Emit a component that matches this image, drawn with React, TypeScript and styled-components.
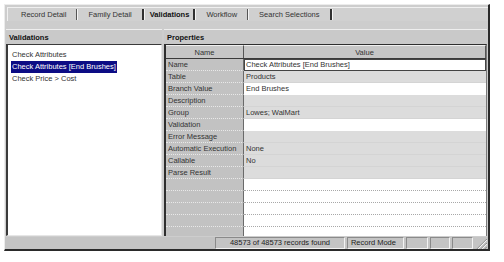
import React from "react";
import styled, { createGlobalStyle, css } from "styled-components";

const Global = createGlobalStyle`
  html, body { margin: 0; padding: 0; background: #ffffff; }
  body { font-family: "Liberation Sans", Arial, sans-serif; font-size: 7.5px; color: #1a1a1a; }
  * { box-sizing: border-box; }
`;

const Window = styled.div`
  margin: 4px 0 0 4px;
  width: 486px;
  height: 247px;
  background: #cdcdcd;
  border-top: 1px solid #ececec;
  border-left: 1px solid #ececec;
  border-right: 2px solid #2a2a2a;
  border-bottom: 2px solid #2a2a2a;
  display: flex;
  flex-direction: column;
`;

const TabBar = styled.div`
  margin: 2px 0 0 2px;
  height: 15px;
  display: flex;
  align-items: center;
  border-top: 1px solid #f0f0f0;
  border-left: 1px solid #f0f0f0;
  background: #d0d0d0;
  padding-left: 3px;
`;

const Tab = styled.div<{ $active?: boolean }>`
  font-size: 7.5px;
  color: #333;
  padding: 0 10px;
  white-space: nowrap;
  ${(p) =>
    p.$active &&
    css`
      font-weight: bold;
      color: #111;
      padding: 0 4px 0 5px;
    `}
`;

const Sep = styled.div<{ $strong?: boolean }>`
  width: ${(p) => (p.$strong ? "2px" : "1px")};
  height: 11px;
  background: ${(p) => (p.$strong ? "#303030" : "#555")};
  border-right: 1px solid #f4f4f4;
  box-sizing: content-box;
`;

const Panels = styled.div`
  margin: 8px 0 0 1px;
  height: 207px;
  display: flex;
  gap: 2px;
`;

const Panel = styled.div<{ $w: number }>`
  width: ${(p) => p.$w}px;
  display: flex;
  flex-direction: column;
`;

const PanelHeader = styled.div`
  height: 15px;
  display: flex;
  align-items: center;
  padding-left: 3px;
  font-weight: bold;
  font-size: 7.5px;
  color: #111;
  border-top: 1px solid #eeeeee;
  background: #c9c9c9;
`;

const List = styled.div`
  flex: 1;
  background: #ffffff;
  border-left: 2px solid #3a3a3a;
  border-top: 1px solid #3a3a3a;
  border-right: 1px solid #e6e6e6;
  border-bottom: 1px solid #e6e6e6;
  padding: 4px 0 0 3px;
  display: flex;
  flex-direction: column;
  align-items: flex-start;
`;

const Item = styled.div<{ $sel?: boolean }>`
  height: 12px;
  line-height: 12px;
  padding: 0 1px;
  color: #333;
  white-space: nowrap;
  ${(p) =>
    p.$sel &&
    css`
      background: #0c0c84;
      color: #ffffff;
    `}
`;

const Grid = styled.div`
  flex: 1;
  border-left: 2px solid #2e2e2e;
  border-top: 1px solid #2e2e2e;
  border-right: 1px solid #7a7a7a;
  display: flex;
  flex-direction: column;
  overflow: hidden;
  background: #ffffff;
`;

const HeadRow = styled.div`
  height: 14px;
  display: flex;
  border-bottom: 1px solid #3a3a3a;
  flex: none;
`;

const HeadCell = styled.div<{ $name?: boolean }>`
  ${(p) => (p.$name ? "width: 78px;" : "flex: 1;")}
  background: #c6c6c6;
  border-top: 1px solid #efefef;
  border-right: 1px solid #555;
  display: flex;
  align-items: center;
  justify-content: center;
  color: #333;
`;

const Row = styled.div`
  height: 12px;
  display: flex;
  flex: none;
`;

const NameCell = styled.div`
  width: 78px;
  background: #c2c2c2;
  border-right: 1px solid #6a6a6a;
  border-bottom: 1px dotted #e8e8e8;
  padding-left: 2px;
  line-height: 12px;
  color: #333;
  white-space: nowrap;
  overflow: hidden;
`;

const ValueCell = styled.div<{ $kind: "white" | "gray" | "active" | "empty" }>`
  flex: 1;
  padding-left: 2px;
  line-height: 12px;
  color: #333;
  white-space: nowrap;
  border-bottom: 1px solid transparent;
  ${(p) =>
    p.$kind === "gray" &&
    css`
      background: #dcdcdc;
      border-bottom-color: #d4d4d4;
    `}
  ${(p) =>
    p.$kind === "white" &&
    css`
      background: #ffffff;
    `}
  ${(p) =>
    p.$kind === "active" &&
    css`
      background: #ffffff;
      border: 1px solid #444;
      line-height: 10px;
      padding-left: 1px;
    `}
  ${(p) =>
    p.$kind === "empty" &&
    css`
      background: #ffffff;
      border-bottom: 1px dotted #a8a8a8;
    `}
`;

const Status = styled.div`
  height: 12px;
  margin-top: 1px;
  display: flex;
  align-items: stretch;
  padding-left: 210px;
  background: #c4c4c4;
  gap: 2px;
`;

const StatusPanel = styled.div<{ $w: number; $center?: boolean }>`
  width: ${(p) => p.$w}px;
  border-top: 1px solid #8a8a8a;
  border-left: 1px solid #8a8a8a;
  border-right: 1px solid #f2f2f2;
  border-bottom: 1px solid #f2f2f2;
  display: flex;
  align-items: center;
  justify-content: ${(p) => (p.$center ? "center" : "flex-start")};
  padding-left: ${(p) => (p.$center ? 0 : 3)}px;
  color: #222;
  white-space: nowrap;
  line-height: 10px;
`;

const Grip = styled.svg`
  width: 13px;
  height: 11px;
  margin-left: auto;
  align-self: flex-end;
`;

type Prop = { name: string; value: string; kind: "white" | "gray" | "active" };

const props: Prop[] = [
  { name: "Name", value: "Check Attributes [End Brushes]", kind: "active" },
  { name: "Table", value: "Products", kind: "gray" },
  { name: "Branch Value", value: "End Brushes", kind: "white" },
  { name: "Description", value: "", kind: "gray" },
  { name: "Group", value: "Lowes; WalMart", kind: "gray" },
  { name: "Validation", value: "", kind: "white" },
  { name: "Error Message", value: "", kind: "gray" },
  { name: "Automatic Execution", value: "None", kind: "gray" },
  { name: "Callable", value: "No", kind: "gray" },
  { name: "Parse Result", value: "", kind: "gray" },
];

export default function App() {
  return (
    <>
      <Global />
      <Window>
        <TabBar>
          <Tab>Record Detail</Tab>
          <Sep />
          <Tab>Family Detail</Tab>
          <Sep $strong />
          <Tab $active>Validations</Tab>
          <Sep $strong />
          <Tab>Workflow</Tab>
          <Sep />
          <Tab>Search Selections</Tab>
          <Sep $strong />
        </TabBar>
        <Panels>
          <Panel $w={156}>
            <PanelHeader>Validations</PanelHeader>
            <List>
              <Item>Check Attributes</Item>
              <Item $sel>Check Attributes [End Brushes]</Item>
              <Item>Check Price &gt; Cost</Item>
            </List>
          </Panel>
          <Panel $w={323}>
            <PanelHeader>Properties</PanelHeader>
            <Grid>
              <HeadRow>
                <HeadCell $name>Name</HeadCell>
                <HeadCell>Value</HeadCell>
              </HeadRow>
              {props.map((p) => (
                <Row key={p.name}>
                  <NameCell>{p.name}</NameCell>
                  <ValueCell $kind={p.kind}>{p.value}</ValueCell>
                </Row>
              ))}
              {[0, 1, 2, 3, 4].map((i) => (
                <Row key={"e" + i}>
                  <NameCell />
                  <ValueCell $kind="empty" />
                </Row>
              ))}
            </Grid>
          </Panel>
        </Panels>
        <Status>
          <StatusPanel $w={132} $center>
            48573 of 48573 records found
          </StatusPanel>
          <StatusPanel $w={58}>Record Mode</StatusPanel>
          <StatusPanel $w={22} />
          <StatusPanel $w={21} />
          <StatusPanel $w={21} />
          <Grip viewBox="0 0 13 11">
            <path d="M12 1 L2 11 M12 5 L6 11 M12 9 L10 11" stroke="#808080" strokeWidth="1" />
            <path d="M12 2 L3 11 M12 6 L7 11" stroke="#ffffff" strokeWidth="1" />
          </Grip>
        </Status>
      </Window>
    </>
  );
}
